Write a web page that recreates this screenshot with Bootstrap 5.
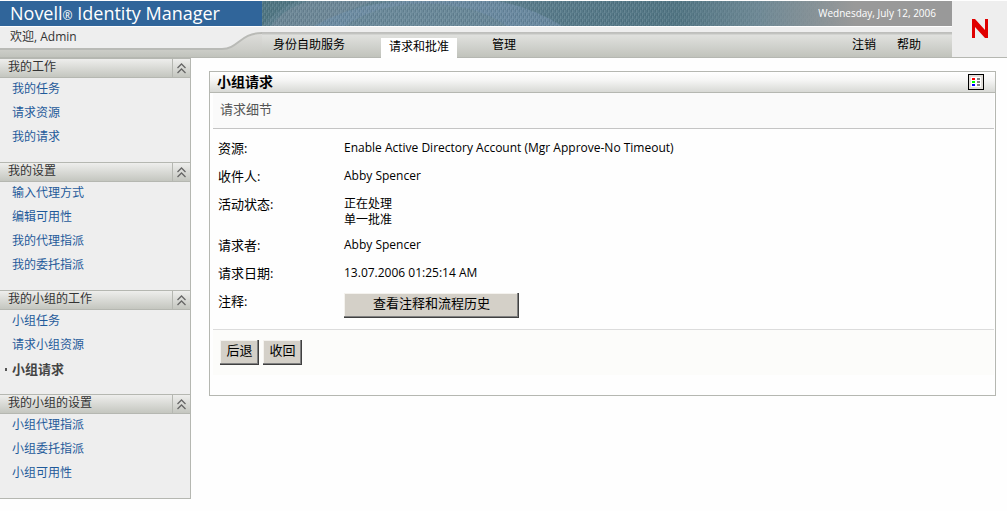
<!DOCTYPE html>
<html lang="zh-CN">
<head>
<meta charset="utf-8">
<meta name="viewport" content="width=device-width, initial-scale=1">
<title>Novell Identity Manager</title>
<link href="https://cdn.jsdelivr.net/npm/bootstrap@5.3.0/dist/css/bootstrap.min.css" rel="stylesheet">
<style>
  body { font-family: "Open Sans", "Noto Sans CJK SC", sans-serif; font-size: 12px; line-height: 16px; color: #000; background: #fefefe; }
  a { text-decoration: none; }

  /* header */
  .masthead { padding-top: 1px; }
  .brand-row { height: 25px; background: #999; margin-bottom: 1px; }
  .brand { width: 262px; background: #30659a; color: #fff; font-size: 18px; line-height: 25px; padding-left: 10px; }
  .brand small { font-size: 12px; }
  .today { right: 16px; top: 4px; color: #fff; font-size: 10px; }
  .menu-row { height: 31px; border-bottom: 1px solid #b5b7b1;
    background: linear-gradient(#eee 5px, #bcbcba 5px, #c4c5c2 7px, #e0e1de 8px, #c1c3bc 30px); }
  .swoosh { width: 262px; height: 30px; }
  .welcome { width: 262px; padding: 2px 0 0 10px; color: #333; }
  .menu-row nav { padding: 0 31px 0 11px; }
  .menu-row a { color: #000; line-height: 18px; margin-top: 9px; }
  .menu-row a.current { background: #fff; height: 20px; padding: 0 8px; margin: 11px 35px 0 36px; }
  .menu-row .help { margin-left: 21px; }
  .corner { width: 55px; background: #eee; border-bottom: 1px solid #b5b7b1; }

  /* sidebar */
  .side { width: 191px; background: #eee; border-right: 1px solid #b5b7b1; border-bottom: 1px solid #b5b7b1; }
  .side section { padding-bottom: 12px; }
  .side h2 { font-size: 12px; font-weight: 400; line-height: 16px; color: #333; padding-left: 8px; margin: 0; height: 20px;
    border-top: 1px solid #b5b7b1; border-bottom: 1px solid #b5b7b1; background: linear-gradient(#eeeeec, #c4c6bf); }
  .fold { width: 18px; border: 0; border-left: 1px solid #b5b7b1; background: none; padding: 0; }
  .side li a { display: block; height: 24px; line-height: 22px; padding-left: 12px; color: #1f5a9a; }
  .side li a.current { font-size: 13px; font-weight: 700; color: #444; background: linear-gradient(#555, #555) 5px 10px / 2px 3px no-repeat; }

  /* request panel */
  main { padding: 13px 11px 0 18px; min-width: 0; }
  .panel { border: 1px solid #b5b7b1; padding-bottom: 20px; font-size: 13px; }
  .panel-title { height: 21px; border-bottom: 1px solid #b5b7b1; background: linear-gradient(#fff, #f6f6f5 8px, #d8d9d5); padding: 0 11px 0 7px; }
  .panel-title h1 { font-size: 14px; font-weight: 700; line-height: 20px; margin: 0; }
  .tool { width: 16px; height: 16px; border: 0; padding: 0; background: none; margin-top: 2px; }
  .inner { margin: 0 1px 0 3px; }
  .caption-bar { height: 36px; background: #fafafa; border-bottom: 1px solid #c4c4c4; color: #555; line-height: 32px; padding-left: 7px; }
  .facts { display: grid; grid-template-columns: 126px 1fr; grid-auto-rows: minmax(19px, auto); row-gap: 9px; margin: 0; padding: 11px 5px; }
  .facts dt { font-weight: 400; }
  .facts dd { margin: 0; }
  .facts .value { font-size: 12px; }
  .win, .win:hover { height: 25px; font-size: 13px; line-height: 16px; color: #000; background: #d4d0c8; padding: 0 0 5px; border: 0; border-radius: 0;
    box-shadow: inset -1px -1px #404040, inset -2px -2px #808080, inset 1px 1px #f4f2ee; }
  .win.wide { width: 175px; }
  .win.narrow { width: 39px; }
  .actions { background: #fcfcfa; border-top: 1px solid #dcdcdc; padding: 10px 7px; }
</style>
</head>
<body>
<header class="masthead d-flex">
  <div class="flex-grow-1">
    <div class="brand-row d-flex position-relative">
      <div class="brand flex-shrink-0">Novell<small>®</small> Identity Manager</div>
      <svg class="flex-grow-1" height="25" viewBox="0 0 690 25" preserveAspectRatio="none" aria-hidden="true">
        <defs>
          <linearGradient id="sea"><stop offset="0" stop-color="#5c7f8d"/><stop offset=".2" stop-color="#688796"/><stop offset=".42" stop-color="#5a7c8b"/><stop offset=".6" stop-color="#537684"/><stop offset=".72" stop-color="#708a96"/><stop offset=".86" stop-color="#999"/></linearGradient>
          <linearGradient id="fade"><stop offset=".55" stop-color="#fff"/><stop offset=".84" stop-color="#000"/></linearGradient>
          <mask id="soft"><rect width="690" height="25" fill="url(#fade)"/></mask>
          <pattern id="weave" width="4" height="6" patternUnits="userSpaceOnUse"><path d="M0 0h1v3h-1zM2 3h1v3h-1z" fill="#b9d0d6" opacity=".16"/><path d="M1 2h1v3h-1zM3 0h1v3h-1z" fill="#123540" opacity=".14"/></pattern>
        </defs>
        <rect width="690" height="25" fill="url(#sea)"/>
        <path d="M0 25Q18 6 36 0H0z" fill="#4b727d" opacity=".6"/>
        <path d="M9 25Q22 7 47 0H112Q83 10 52 25z" fill="#7d909f" opacity=".5"/>
        <path d="M52 25Q92 2 144 0H235Q270 6 300 25H83Z" fill="#7a96b4" opacity=".5"/>
        <path d="M83 25Q110 6 150 3Q210 0 245 25z" fill="#68858f" opacity=".5"/>
        <rect width="690" height="25" fill="url(#weave)" mask="url(#soft)"/>
      </svg>
      <div class="today position-absolute">Wednesday, July 12, 2006</div>
    </div>
    <div class="menu-row d-flex position-relative">
      <svg class="swoosh position-absolute top-0 start-0" viewBox="0 0 262 30" aria-hidden="true">
        <defs><linearGradient id="under" x2="0" y2="1"><stop offset="0" stop-color="#dededb"/><stop offset=".7" stop-color="#cccdc8"/><stop offset="1" stop-color="#c1c3bc"/></linearGradient></defs>
        <path d="M0 22H222C238 22 240 6 262 6V30H0z" fill="url(#under)"/>
        <path d="M0 0H262V6C240 6 238 22 222 22H0z" fill="#eee"/>
        <path d="M0 22H222C238 22 240 6 262 6" fill="none" stroke="#b9bab6" stroke-width="2"/>
      </svg>
      <div class="welcome position-relative flex-shrink-0">欢迎, Admin</div>
      <nav class="d-flex flex-grow-1 align-items-start">
        <a href="#">身份自助服务</a>
        <a href="#" class="current" aria-current="page">请求和批准</a>
        <a href="#">管理</a>
        <a href="#" class="ms-auto">注销</a>
        <a href="#" class="help">帮助</a>
      </nav>
    </div>
  </div>
  <div class="corner flex-shrink-0">
    <svg width="55" height="56" viewBox="0 0 55 56" role="img" aria-label="Novell"><path d="M20 37V18H23L33 29V18H36V37H33L23 26V37z" fill="#e00000"/></svg>
  </div>
</header>

<svg class="d-none"><symbol id="up" viewBox="0 0 17 18"><path d="M4.500 9L8.500 5L12.500 9M4.500 14L8.500 10L12.500 14" fill="none" stroke="#666" stroke-width="1.300"/></symbol></svg>

<div class="d-flex align-items-start">
  <aside class="side flex-shrink-0">
    <section>
      <h2 class="d-flex justify-content-between">我的工作<button class="fold d-flex" aria-label="折叠"><svg width="17" height="18"><use href="#up"/></svg></button></h2>
      <ul class="list-unstyled m-0">
        <li><a href="#">我的任务</a></li><li><a href="#">请求资源</a></li><li><a href="#">我的请求</a></li>
      </ul>
    </section>
    <section>
      <h2 class="d-flex justify-content-between">我的设置<button class="fold d-flex" aria-label="折叠"><svg width="17" height="18"><use href="#up"/></svg></button></h2>
      <ul class="list-unstyled m-0">
        <li><a href="#">输入代理方式</a></li><li><a href="#">编辑可用性</a></li><li><a href="#">我的代理指派</a></li><li><a href="#">我的委托指派</a></li>
      </ul>
    </section>
    <section>
      <h2 class="d-flex justify-content-between">我的小组的工作<button class="fold d-flex" aria-label="折叠"><svg width="17" height="18"><use href="#up"/></svg></button></h2>
      <ul class="list-unstyled m-0">
        <li><a href="#">小组任务</a></li><li><a href="#">请求小组资源</a></li><li><a href="#" class="current">小组请求</a></li>
      </ul>
    </section>
    <section>
      <h2 class="d-flex justify-content-between">我的小组的设置<button class="fold d-flex" aria-label="折叠"><svg width="17" height="18"><use href="#up"/></svg></button></h2>
      <ul class="list-unstyled m-0">
        <li><a href="#">小组代理指派</a></li><li><a href="#">小组委托指派</a></li><li><a href="#">小组可用性</a></li>
      </ul>
    </section>
  </aside>

  <main class="flex-grow-1">
    <div class="panel">
      <div class="panel-title d-flex justify-content-between">
        <h1>小组请求</h1>
        <button class="tool d-flex" aria-label="图例">
          <svg width="16" height="16" viewBox="0 0 16 16" shape-rendering="crispEdges"><path d="M0 0h16v16H0z"/><path d="M1 1h14v14H1z" fill="#e2dfda"/><path d="M3 3h10v10H3z" fill="#fff"/><path d="M4 4h3v2H4z" fill="red"/><path d="M4 7h3v2H4z" fill="#0f0"/><path d="M4 10h3v2H4z" fill="#00f"/><path d="M9 4h3v2H9zM9 7h3v2H9zM9 10h3v2H9z" fill="#808080"/></svg>
        </button>
      </div>
      <div class="inner">
        <div class="caption-bar">请求细节</div>
        <dl class="facts">
          <dt>资源:</dt><dd class="value">Enable Active Directory Account (Mgr Approve-No Timeout)</dd>
          <dt>收件人:</dt><dd class="value">Abby Spencer</dd>
          <dt>活动状态:</dt><dd class="value">正在处理<br>单一批准</dd>
          <dt>请求者:</dt><dd class="value">Abby Spencer</dd>
          <dt>请求日期:</dt><dd class="value">13.07.2006 01:25:14 AM</dd>
          <dt>注释:</dt><dd><button type="button" class="btn win wide">查看注释和流程历史</button></dd>
        </dl>
        <div class="actions d-flex gap-1">
          <button type="button" class="btn win narrow">后退</button>
          <button type="button" class="btn win narrow">收回</button>
        </div>
      </div>
    </div>
  </main>
</div>
<script src="https://cdn.jsdelivr.net/npm/bootstrap@5.3.0/dist/js/bootstrap.bundle.min.js"></script>
</body>
</html>
